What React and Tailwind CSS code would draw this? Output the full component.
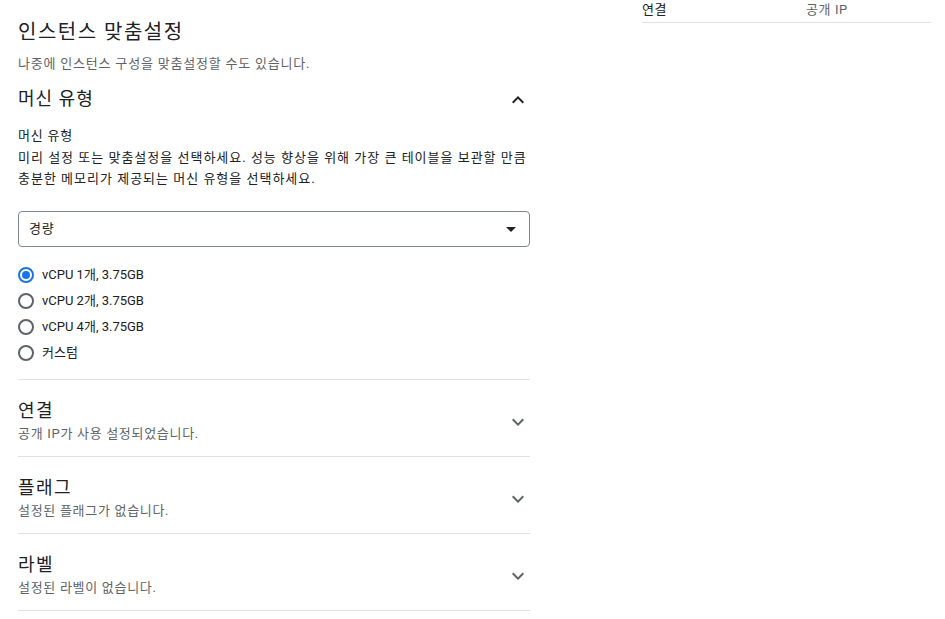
import React from "react";

const font = { fontFamily: '"Roboto", "Noto Sans CJK KR", sans-serif' };

function ChevronUp() {
  return (
    <svg width="24" height="24" viewBox="0 0 24 24" className="text-[#202124]">
      <path d="M7.41 15.41L12 10.83l4.59 4.58L18 14l-6-6-6 6z" fill="currentColor" />
    </svg>
  );
}

function ChevronDown() {
  return (
    <svg width="24" height="24" viewBox="0 0 24 24" className="text-[#5f6368]">
      <path d="M7.41 8.59L12 13.17l4.59-4.58L18 10l-6 6-6-6 1.41-1.41z" fill="currentColor" />
    </svg>
  );
}

function Radio({ checked, label }) {
  return (
    <div className="flex items-center h-[26px]">
      <div
        className={
          "w-[16px] h-[16px] rounded-full border-2 flex items-center justify-center " +
          (checked ? "border-[#1a73e8]" : "border-[#5f6368]")
        }
      >
        {checked && <div className="w-[8px] h-[8px] rounded-full bg-[#1a73e8]" />}
      </div>
      <span className="ml-[8px] text-[13px] leading-[20px] text-[#202124]">{label}</span>
    </div>
  );
}

function Section({ title, sub }) {
  return (
    <div className="flex items-center border-b border-[#e0e0e0] pt-[19px] pb-[13px]">
      <div className="flex-1">
        <div className="text-[18px] leading-[24px] text-[#202124] tracking-[1.5px]">{title}</div>
        <div className="mt-[2px] text-[13px] leading-[18px] text-[#5f6368] tracking-[0.7px]">{sub}</div>
      </div>
      <div className="mt-[2px]">
        <ChevronDown />
      </div>
    </div>
  );
}

export default function App() {
  return (
    <div className="flex w-[945px] h-[619px] bg-white overflow-hidden" style={font}>
      <div className="w-[512px] ml-[18px] shrink-0">
        <h1 className="text-[20px] leading-[28px] mt-[18px] text-[#202124] tracking-[1.5px]">인스턴스 맞춤설정</h1>
        <p className="text-[13px] leading-[18px] mt-[9px] text-[#5f6368] tracking-[0.8px]">
          나중에 인스턴스 구성을 맞춤설정할 수도 있습니다.
        </p>
        <div className="flex items-center justify-between mt-[14px] h-[24px]">
          <div className="text-[18px] leading-[24px] text-[#202124] tracking-[1px]">머신 유형</div>
          <div className="mt-[2px]">
            <ChevronUp />
          </div>
        </div>
        <div className="mt-[15px] text-[13px] leading-[20px] text-[#202124] tracking-[0.8px]">머신 유형</div>
        <p className="mt-[1px] text-[13px] leading-[21px] text-[#202124] tracking-[1px]">
          미리 설정 또는 맞춤설정을 선택하세요. 성능 향상을 위해 가장 큰 테이블을 보관할 만큼
          <br />
          충분한 메모리가 제공되는 머신 유형을 선택하세요.
        </p>
        <div className="mt-[22px] h-[36px] rounded-[4px] border border-[#80868b] flex items-center justify-between pl-[10px] pr-[13px]">
          <span className="text-[13px] leading-[20px] text-[#202124] tracking-[0.8px]">경량</span>
          <svg width="10" height="5" viewBox="0 0 10 5">
            <path d="M0 0h10L5 5z" fill="#202124" />
          </svg>
        </div>
        <div className="mt-[15px] pb-[13px] border-b border-[#e0e0e0]">
          <Radio checked label="vCPU 1개, 3.75GB" />
          <Radio label="vCPU 2개, 3.75GB" />
          <Radio label="vCPU 4개, 3.75GB" />
          <Radio label="커스텀" />
        </div>
        <Section title="연결" sub="공개 IP가 사용 설정되었습니다." />
        <Section title="플래그" sub="설정된 플래그가 없습니다." />
        <Section title="라벨" sub="설정된 라벨이 없습니다." />
      </div>
      <div className="ml-[112px] w-[289px] shrink-0">
        <div className="flex pt-[2px] pb-[4px] border-b border-[#e0e0e0] text-[13px] leading-[16px] tracking-[0.6px]">
          <div className="w-[164px] text-[#202124]">연결</div>
          <div className="text-[#5f6368]">공개 IP</div>
        </div>
      </div>
    </div>
  );
}
